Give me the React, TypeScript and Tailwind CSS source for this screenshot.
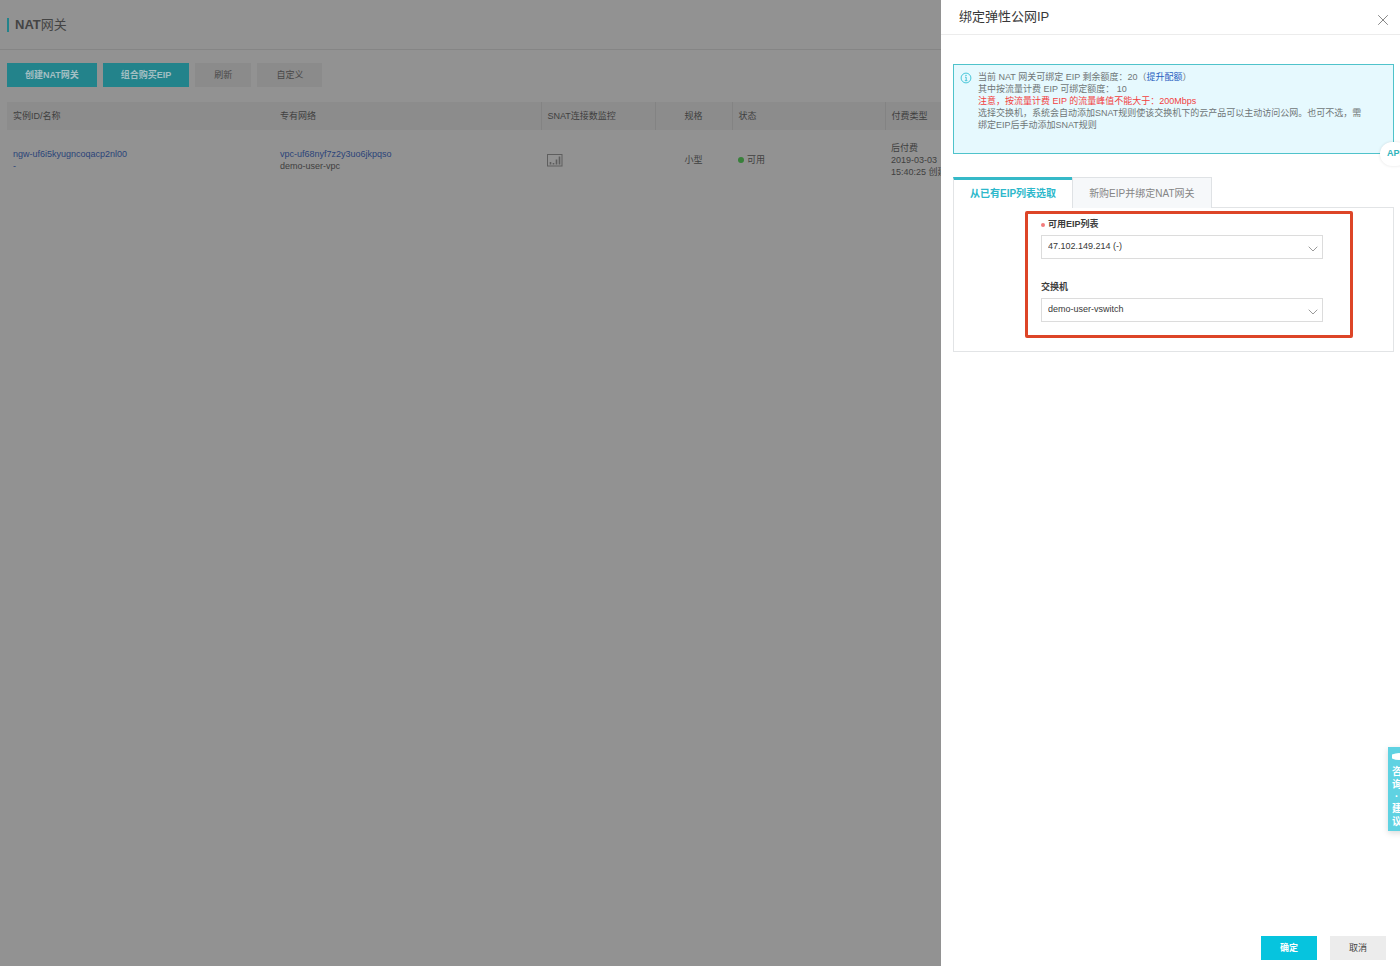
import type { ReactNode } from 'react';

const columns = ['实例ID/名称', '专有网络', 'SNAT连接数监控', '规格', '状态', '付费类型'];

function ChartIcon() {
  return (
    <svg viewBox="0 0 16 13" className="block h-[13px] w-4" fill="none" stroke="#5e5e5e" aria-hidden="true">
      <rect x="0.5" y="0.5" width="14.5" height="11.5" />
      <path d="M3.5 10.5V8M6.5 10.5V9M9.5 10.5V5.5M12.5 10.5V2.5" strokeWidth="1.6" />
    </svg>
  );
}

function InfoIcon() {
  return (
    <svg viewBox="0 0 12 12" className="mt-px h-3 w-3 shrink-0" fill="none" stroke="#35c0d4" aria-hidden="true">
      <circle cx="6" cy="6" r="4.9" strokeWidth="0.9" />
      <path d="M5 5.2h1.2v3.3M4.8 8.7h2.6" strokeWidth="0.9" />
      <circle cx="6" cy="3.4" r="0.7" fill="#35c0d4" stroke="none" />
    </svg>
  );
}

function ToolbarButton({ primary, children }: { primary?: boolean; children: ReactNode }) {
  return (
    <button
      type="button"
      className={
        primary
          ? 'h-6 bg-[#23838b] px-[18px] pt-[2px] text-[9px] font-bold text-[#a3bfc3]'
          : 'h-6 bg-[#8b8b8b] px-[19px] pt-[2px] text-[9px] text-[#484848]'
      }
    >
      {children}
    </button>
  );
}

function SelectField({ id, label, value, required }: { id: string; label: string; value: string; required?: boolean }) {
  return (
    <div>
      <label htmlFor={id} className="flex h-[14px] items-center gap-[3px] text-[9px] font-bold text-[#3c3c3c]">
        {required && <span className="h-1 w-1 rounded-full bg-[#f37b7b]" aria-hidden="true" />}
        {label}
      </label>
      <div className="relative mt-[3px]">
        <select
          id={id}
          defaultValue={value}
          className="block h-6 w-full appearance-none border border-[#dcdcdc] bg-white pl-[6px] pr-6 text-[9px] text-[#383838]"
        >
          <option>{value}</option>
        </select>
        <svg
          viewBox="0 0 10 6"
          className="pointer-events-none absolute right-[5px] top-[11px] h-[6px] w-[10px]"
          fill="none"
          stroke="#8f8f8f"
          strokeWidth="0.9"
          aria-hidden="true"
        >
          <path d="M0.7 0.7 5 5 9.3 0.7" />
        </svg>
      </div>
    </div>
  );
}

function GatewayPage() {
  return (
    <main className="min-h-screen overflow-hidden bg-[#929292]">
      <header className="flex h-[50px] items-center gap-[6px] border-b border-[#858585] pl-[7px]">
        <span className="h-[14px] w-[2px] bg-[#23838b]" aria-hidden="true" />
        <h1 className="text-[13px] text-[#444444]">
          <strong>NAT</strong>网关
        </h1>
      </header>
      <div className="flex gap-[6px] px-[7px] pt-[13px]">
        <ToolbarButton primary>创建NAT网关</ToolbarButton>
        <ToolbarButton primary>组合购买EIP</ToolbarButton>
        <ToolbarButton>刷新</ToolbarButton>
        <ToolbarButton>自定义</ToolbarButton>
      </div>
      <div className="px-[7px] pt-[15px]">
        <table className="w-full table-fixed text-left text-[9px] leading-3 text-[#404040]">
          <colgroup>
            <col className="w-[267px]" />
            <col className="w-[267px]" />
            <col className="w-[114px]" />
            <col className="w-[77px]" />
            <col className="w-[153px]" />
            <col className="w-[75px]" />
            <col />
          </colgroup>
          <thead>
            <tr className="h-7 bg-[#8c8c8c]">
              {columns.map((name, i) => (
                <th
                  key={name}
                  scope="col"
                  className={
                    i < 2
                      ? 'px-[6px] font-normal'
                      : i === 3
                        ? 'border-l border-[#838383] text-center font-normal'
                        : 'border-l border-[#838383] px-[6px] font-normal'
                  }
                >
                  {name}
                </th>
              ))}
              <td />
            </tr>
          </thead>
          <tbody>
            <tr className="h-[60px]">
              <td className="px-[6px]">
                <a href="#gateway" className="text-[#2b4479]">ngw-uf6i5kyugncoqacp2nl00</a>
                <br />
                <span className="text-[#2b4479]">-</span>
              </td>
              <td className="px-[6px]">
                <a href="#vpc" className="text-[#2b4479]">vpc-uf68nyf7z2y3uo6jkpqso</a>
                <br />
                demo-user-vpc
              </td>
              <td className="px-[6px]">
                <ChartIcon />
              </td>
              <td className="text-center">小型</td>
              <td className="px-[6px]">
                <span className="flex items-center gap-[3px]">
                  <span className="h-[6px] w-[6px] rounded-full bg-[#38803a]" aria-hidden="true" />
                  可用
                </span>
              </td>
              <td className="px-[6px]">
                后付费
                <br />
                2019-03-03 15:40:25 创建
              </td>
              <td />
            </tr>
          </tbody>
        </table>
      </div>
    </main>
  );
}

function BindDrawer() {
  return (
    <aside
      role="dialog"
      aria-labelledby="drawer-title"
      className="fixed inset-y-0 right-0 flex w-[459px] max-w-full flex-col bg-white"
    >
      <header className="flex h-[35px] items-center justify-between border-b border-[#ececec] pl-[18px] pr-[11px]">
        <h2 id="drawer-title" className="text-[13px] text-[#383838]">绑定弹性公网IP</h2>
        <button type="button" aria-label="关闭" className="mt-[5px]">
          <svg viewBox="0 0 12 12" className="h-3 w-3" fill="none" stroke="#7a7a7a" strokeWidth="0.9" aria-hidden="true">
            <path d="M1.2 1.2 10.8 10.8M10.8 1.2 1.2 10.8" />
          </svg>
        </button>
      </header>

      <div className="flex-1 pl-3 pr-[6px] pt-[29px]">
        <section className="flex gap-[6px] border border-[#4fc3cb] bg-[#e6f9fe] pb-[22px] pl-[6px] pr-6 pt-[6px] text-[9px] leading-3 text-[#6f7677]">
          <InfoIcon />
          <div>
            <p>
              当前 NAT 网关可绑定 EIP 剩余额度：20（<a href="#quota" className="text-[#2660c0]">提升配额</a>）
            </p>
            <p>其中按流量计费 EIP 可绑定额度： 10</p>
            <p className="text-[#f23f3f]">注意，按流量计费 EIP 的流量峰值不能大于：200Mbps</p>
            <p>选择交换机，系统会自动添加SNAT规则使该交换机下的云产品可以主动访问公网。也可不选，需绑定EIP后手动添加SNAT规则</p>
          </div>
        </section>

        <div role="tablist" className="mt-[23px] flex text-[10px]">
          <button
            type="button"
            role="tab"
            aria-selected="true"
            className="h-[31px] border-l border-t-[3px] border-l-[#e2e4e6] border-t-[#35b9c8] px-4 pb-[2px] font-bold text-[#2db8cb]"
          >
            从已有EIP列表选取
          </button>
          <button
            type="button"
            role="tab"
            aria-selected="false"
            className="h-[31px] border-x border-t border-[#dfe2e5] bg-[#f6f8fa] px-4 text-[#858585]"
          >
            新购EIP并绑定NAT网关
          </button>
          <span className="flex-1 border-b border-[#e2e4e6]" />
        </div>

        <section className="border-x border-b border-[#e2e4e6] pb-[13px] pl-[71px] pr-10 pt-[3px]">
          <div className="flex flex-col gap-[22px] rounded-[2px] border-[3px] border-[#dd4528] pb-[13px] pl-[13px] pr-[27px] pt-1">
            <SelectField id="eip" label="可用EIP列表" value="47.102.149.214 (-)" required />
            <SelectField id="vswitch" label="交换机" value="demo-user-vswitch" />
          </div>
        </section>
      </div>

      <footer className="flex justify-end gap-[13px] pb-[6px] pr-[14px] text-[9px]">
        <button type="button" className="h-6 bg-[#06c4de] px-[19px] pt-[2px] font-bold text-white">确定</button>
        <button type="button" className="h-6 bg-[#ececec] px-[19px] pt-[2px] text-[#444444]">取消</button>
      </footer>
    </aside>
  );
}

export default function App() {
  return (
    <div className="font-['Liberation_Sans','Noto_Sans_CJK_SC',sans-serif]">
      <GatewayPage />
      <BindDrawer />
      <button
        type="button"
        className="fixed -right-2 top-[142px] h-6 w-7 rounded-full bg-white pl-[7px] text-left text-[9px] font-bold text-[#2fb4bc] shadow-[0_0_3px_rgba(0,0,0,0.12)]"
      >
        API
      </button>
      <button
        type="button"
        className="fixed -right-2 top-[747px] flex h-[84px] w-5 flex-col items-start bg-[#5fd2e2] pl-1 pt-[5px] text-[10px] font-bold leading-[13px] text-white shadow-[0_2px_6px_rgba(0,0,0,0.15)]"
      >
        <svg viewBox="0 0 14 9" className="mb-1 h-[9px] w-[14px]" fill="#ffffff" aria-hidden="true">
          <path d="M0 2.5Q7 -0.5 14 2.5V6.5Q7 9.5 0 6.5Z" />
        </svg>
        <span>咨</span>
        <span>询</span>
        <span className="pl-[3px] leading-[11px]">·</span>
        <span>建</span>
        <span>议</span>
      </button>
    </div>
  );
}
